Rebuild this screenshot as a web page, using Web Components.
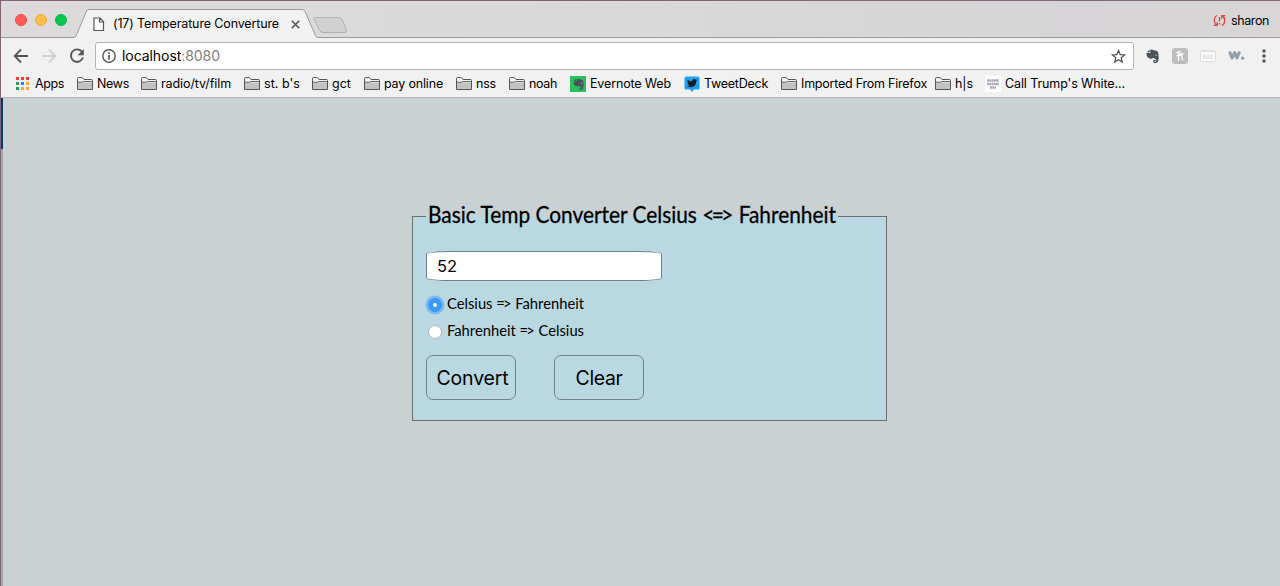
<!DOCTYPE html>
<html lang="en">
<head>
<meta charset="utf-8">
<title>Temperature Converture</title>
<style>
html,body{margin:0;height:100%;overflow:hidden}
body{font-family:Inter,"Open Sans",sans-serif;color:#000}
</style>
</head>
<body>
<browser-window></browser-window>
<script>
/* A single line of text set to a given width, by tracking or by condensing. */
class FitText extends HTMLElement{
  connectedCallback(){
    const r=this.attachShadow({mode:'open'});
    const w=+this.getAttribute('w');
    r.innerHTML=`<style>:host{display:inline-block;flex:none;width:${w}px;white-space:nowrap}span{display:inline-block;transform-origin:0 50%}</style><span><slot></slot></span>`;
    const s=r.querySelector('span'),n=s.getBoundingClientRect().width;
    if(this.hasAttribute('scale'))s.style.transform=`scaleX(${w/n})`;
    else s.style.letterSpacing=(w-n)/this.textContent.length+'px';
  }
}
customElements.define('fit-text',FitText);

const define=(name,html)=>{
  const t=document.createElement('template');t.innerHTML=html;
  customElements.define(name,class extends HTMLElement{
    constructor(){super();this.attachShadow({mode:'open'}).append(t.content.cloneNode(true));}
  });
};

define('folder-icon',`<style>:host{display:block;width:16px;height:14px}svg{display:block}</style>
<svg width="16" height="14" viewBox="0 0 16 14"><path d="M.5 12.5V1.5Q.5.6 1.4.6H5.3L7 2.5H14.6Q15.5 2.5 15.5 3.4V12.5Z" fill="#f4f4f4" stroke="#555"/><path d="M1 5.5H15V12H1Z" fill="#c2c2c2"/><path d="M1 5.2H5.5L7 4.5H15" fill="none" stroke="#666"/></svg>`);

define('book-mark',`<style>:host{display:flex;align-items:center;height:20px;flex:none;font-size:12.500px;margin-right:var(--after,12px)}
.i{width:16px;margin-right:var(--gap,4px);display:flex;flex:none}</style>
<span class="i"><slot name="icon"><folder-icon></folder-icon></slot></span><slot></slot>`);

define('tab-strip',`<style>
:host{display:block;height:38px;position:relative;background:linear-gradient(90deg,#dedadc,#d9d9d9 50%,#d6d4d6 85%,#dad6d8);font-size:12.500px}
svg.bg{position:absolute;left:0;top:0}
.row{position:relative;display:flex;align-items:center;height:38px;padding:2px 11px 0 15px;box-sizing:border-box}
.d{width:10px;height:10px;border-radius:50%;border:1px solid;margin-right:8px}
.t{margin-top:7px;height:20px;display:flex;align-items:center}.x{margin:8px 0 0 12px}
.u{margin-left:auto;display:flex;align-items:center;gap:5px}
</style>
<svg class="bg" width="1280" height="38"><path d="M0 37.5H73Q75.500 37.500 76.300 35.500L86.500 11Q87.200 9.500 89 9.500H302Q304.200 9.500 305 11.500L315.500 35.500Q316.200 37.500 318.500 37.500H1280V39H0Z" fill="#f2f1f2" stroke="#999"/><path d="M315.500 17.500H338.500Q341 17.500 342 19.500L346.500 30Q347 32.500 345 32.500H323Q320.500 32.500 319.500 30.500L314.300 19.500Q313.600 17.500 315.500 17.500Z" fill="#d2d1d2" stroke="#b2b1b2"/></svg>
<div class="row">
<span class="d" style="background:#fd5b58;border-color:#ed4945"></span><span class="d" style="background:#fdbd4b;border-color:#eaa936"></span><span class="d" style="background:#08c652;border-color:#07b347;margin-right:0"></span>
<svg style="margin:8px 8px 0 26px;flex:none" width="12" height="15"><path d="M1 1H7L10.500 4.500V13.500H1ZM6.500 1V5H10.500" fill="#fff" stroke="#555" stroke-width="1.200"/></svg>
<span class="t"><fit-text w="166">(17) Temperature Converture</fit-text></span>
<svg class="x" width="9" height="9"><path d="M.8.8 8.200 8.200M8.200.8.8 8.200" stroke="#555" stroke-width="1.600"/></svg>
<span class="u"><svg width="13" height="13" viewBox="0 0 13 13" fill="none" stroke="#d64a3a" stroke-width="1.300"><path d="M4.200 1.500Q1.300 2.500 1.300 6.500Q1.300 9.500 3.500 11M.8 11.400H4.200V8.300M8.800 11.500Q11.700 10.500 11.700 6.500Q11.700 3.500 9.500 2M12.200 1.600H8.800V4.700"/><path d="M6.500 3V7.500M6.500 9V10.500"/></svg><fit-text w="38">sharon</fit-text></span>
</div>`);

define('tool-bar',`<style>
:host{display:flex;align-items:center;height:36px;box-sizing:border-box;background:#f2f1f2;padding:0 10px 0 13px}
svg{flex:none;display:block}
.omni{display:flex;align-items:center;box-sizing:border-box;width:1039px;height:28px;border:1px solid #b5b5b5;border-radius:3px;background:#fff;padding:0 7px 0 6px;font-size:14px;margin:0 12px 0 10px}
.omni fit-text{margin:-1px 0 0 6px}b{font-weight:400;color:#808080}
</style>
<svg width="16" height="16" fill="none" stroke="#555" stroke-width="1.800"><path d="M15 8H2M8 1.500 1.700 8 8 14.500"/></svg>
<svg style="margin-left:12px" width="16" height="16" fill="none" stroke="#d0d0d0" stroke-width="1.800"><path d="M1 8H14M8 1.500 14.300 8 8 14.500"/></svg>
<svg style="margin-left:12px" width="16" height="16"><path d="M12.700 3.400A6.200 6.200 0 1 0 14 9.500" fill="none" stroke="#555" stroke-width="1.900"/><path d="M14.800 1V7.200H8.600Z" fill="#555"/></svg>
<div class="omni"><svg width="14" height="14"><circle cx="7" cy="7" r="6.200" fill="none" stroke="#555" stroke-width="1.400"/><path d="M7 6V10.500M7 3.300V4.900" stroke="#555" stroke-width="1.700"/></svg>
<fit-text w="98">localhost<b>:8080</b></fit-text>
<svg style="margin-left:auto" width="15" height="15"><path d="M7.500 1.500 9.200 5.600 13.600 5.900 10.200 8.800 11.300 13.100 7.500 10.700 3.700 13.100 4.800 8.800 1.400 5.900 5.800 5.600Z" fill="none" stroke="#555" stroke-width="1.300"/></svg></div>
<elephant-icon></elephant-icon>
<svg style="margin-left:13px" width="16" height="16"><rect width="16" height="16" rx="3" fill="#bdbdbf"/><path d="M6.500 3V12.800M4.300 4.800 8.500 3.300M6.500 9Q7.500 7 9.200 7.200Q10.500 7.500 10 9.500T10.800 12.500M9 7V4.500M4.500 7.800 11.500 5.600" fill="none" stroke="#fff" stroke-width="1.300"/></svg>
<svg style="margin-left:12px" width="16" height="14"><rect x=".5" y="1.500" width="15" height="11" rx="1" fill="#f8f8f8" stroke="#dedede"/><path d="M1 2.500H15" stroke="#e1e1e1"/><path d="M3.500 6V10M3.500 8H6M6 6V10M8 6V10M10 6.500H12V9.500H10Z" fill="none" stroke="#dcdcdc"/></svg>
<svg style="margin-left:12px" width="17" height="12"><path d="M1.500 1.500 4 8 6.700 2.500 9 8 11.700 1.500" fill="none" stroke="#8fa1aa" stroke-width="3" stroke-linejoin="round"/><circle cx="14.600" cy="8.200" r="1.600" fill="#8fa1aa"/></svg>
<svg style="margin-left:16px" width="5" height="14" fill="#555"><circle cx="3" cy="2" r="1.700"/><circle cx="3" cy="7" r="1.700"/><circle cx="3" cy="12" r="1.700"/></svg>`);

define('elephant-icon',`<style>:host{display:block;width:13px;flex:none}svg{display:block}</style>
<svg width="13" height="15" viewBox="0 0 13 15" fill="#46555a"><path d="M3.600.7V3.200H.7Z"/><path d="M4.300.7Q6.500.2 7.600 1.200Q11.200 1.300 12 3Q13.400 9.500 12 12.500Q11.200 14.300 8.700 14.200Q7 14 7.200 12Q7.400 10.500 9.700 10.700V12H8.600V12.900Q10.600 13 10.400 11Q10.200 9.700 8.200 9.500L7 8.700Q6.700 10 5 9.800Q1.200 9.300.5 5.500V4H4.300Z"/><path d="M9.300 6.200Q10.500 5.700 10.900 6.800" stroke="#ddd" fill="none" stroke-width=".8"/></svg>`);

define('bookmarks-bar',`<style>:host{display:flex;align-items:center;height:24px;box-sizing:border-box;background:#f2f1f2;border-bottom:1px solid #b4b6b8;padding:0 0 3px 15px}
svg{display:block}fit-text{margin-top:-1px}.ev{width:16px;height:16px;background:#2dbe60;display:flex;justify-content:center;align-items:center}.ev elephant-icon{transform:scale(.83)}
.wh{width:16px;height:16px;background:#fff;display:block}</style>
<book-mark style="--after:13px;--gap:4px"><svg slot="icon" width="15" height="14"><path fill="#ee3e38" d="M1 0h3v3H1zM6 0h3v3H6zM11 0h3v3H11z"/><path fill="#1f9d58" d="M1 5h3v3H1zM1 10h3v3H1z"/><path fill="#2086f5" d="M6 5h3v3H6z"/><path fill="#fba733" d="M11 5h3v3H11zM6 10h3v3H6zM11 10h3v3H11z"/></svg><fit-text w="29">Apps</fit-text></book-mark>
<book-mark><fit-text w="32">News</fit-text></book-mark>
<book-mark style="--after:13px"><fit-text w="70">radio/tv/film</fit-text></book-mark>
<book-mark><fit-text w="36">st. b's</fit-text></book-mark>
<book-mark style="--after:13px"><fit-text w="19">gct</fit-text></book-mark>
<book-mark style="--after:13px"><fit-text w="59">pay online</fit-text></book-mark>
<book-mark style="--after:13px"><fit-text w="20">nss</fit-text></book-mark>
<book-mark style="--after:13px"><fit-text w="28">noah</fit-text></book-mark>
<book-mark style="--after:13px"><span class="ev" slot="icon"><elephant-icon></elephant-icon></span><fit-text w="81">Evernote Web</fit-text></book-mark>
<book-mark style="--after:13px"><svg slot="icon" width="16" height="16"><path d="M2 .5H14Q15.500.5 15.500 2V12Q15.500 13.500 14 13.500H10L8 16 6 13.500H2Q.5 13.500.5 12V2Q.5.500 2 .5Z" fill="#1da1f2"/><path d="M3.500 3.500Q5.500 5.500 8 5.500Q8 2.500 10.500 3L13 3.800 12.200 5.500Q12 10.500 7.500 11.200Q5 11.500 3 10.200L5.200 9.500 3.700 7.500Z" fill="#111e28"/></svg><fit-text w="64">TweetDeck</fit-text></book-mark>
<book-mark style="--after:8px"><fit-text w="126">Imported From Firefox</fit-text></book-mark>
<book-mark style="--after:12px"><fit-text w="18">h|s</fit-text></book-mark>
<book-mark><svg class="wh" slot="icon" width="16" height="16"><path d="M2 4.500H14M2 8H14M5 11.500H11" stroke="#a3a5b5" stroke-width="2.400" stroke-dasharray="1.900 .4"/></svg><fit-text w="120">Call Trump's White...</fit-text></book-mark>`);

define('radio-option',`<style>:host{display:flex;align-items:center;height:27px;font:15.500px Lato,sans-serif}
i{box-sizing:border-box;width:14px;height:14px;border-radius:50%;background:#fff;border:1px solid #aab5ba;margin:3px 5px 0 2px;flex:none}
:host([checked]) i{border:5px solid #3b99fc;box-shadow:0 0 0 2.500px #7db9ec}</style><i></i><slot></slot>`);

define('push-button',`<style>:host{display:flex;align-items:center;justify-content:center;box-sizing:border-box;width:90px;height:45px;border:1px solid #708090;border-radius:7px;font-size:19.500px}</style><slot></slot>`);

define('temp-converter',`<style>
:host{display:block;width:475px}
fieldset{margin:0;padding:0 13px;border:1px solid #6e6e6e;background:#bad8e2;height:218px;box-sizing:border-box;min-width:0}
legend{padding:0 2px;height:27px;line-height:24px;font-family:Lato,sans-serif;font-size:22.500px;-webkit-text-stroke:.3px #000}
.a{letter-spacing:-2.800px;margin-right:2.800px}.r .a{letter-spacing:-2px;margin-right:2px}
.in{margin-top:21px;box-sizing:border-box;width:236px;height:30px;border:1px solid #708090;border-radius:10%;background:#fff;font-size:16.500px;padding-left:10px;display:flex;align-items:center}
.r{margin-top:9px}.r fit-text{margin-top:-1px}.b{display:flex;gap:38px;margin-top:11px}
.b push-button:first-child{padding-left:3px}
</style>
<fieldset><legend><fit-text w="408" scale>Basic Temp Converter Celsius <span class="a">&lt;=&gt;</span> Fahrenheit</fit-text></legend>
<div class="in"><fit-text w="20">52</fit-text></div>
<div class="r"><radio-option checked><fit-text w="137" scale>Celsius <span class="a">=&gt;</span> Fahrenheit</fit-text></radio-option><radio-option><fit-text w="137" scale>Fahrenheit <span class="a">=&gt;</span> Celsius</fit-text></radio-option></div>
<div class="b"><push-button><fit-text w="72">Convert</fit-text></push-button><push-button><fit-text w="47">Clear</fit-text></push-button></div>
</fieldset>`);

define('browser-window',`<style>
:host{display:block;box-sizing:border-box;height:586px;background:#c9d1d3;border-top:1px solid #806676;position:relative}
main{padding:105px 0 0 412px}
.edge{position:absolute;left:0;top:0;width:1px;height:585px;background:#806676}
.strip{position:absolute;left:1px;top:97px;width:2px;height:51px;background:#063b70}
.low{position:absolute;left:1px;top:148px;width:2px;height:437px;background:#9ea6ae}
tab-strip{margin-top:-1px;clip-path:inset(1px 0 0 0)}
</style>
<tab-strip></tab-strip><tool-bar></tool-bar><bookmarks-bar></bookmarks-bar>
<main><temp-converter></temp-converter></main>
<div class="edge"></div><div class="strip"></div><div class="low"></div>`);
</script>
</body>
</html>
